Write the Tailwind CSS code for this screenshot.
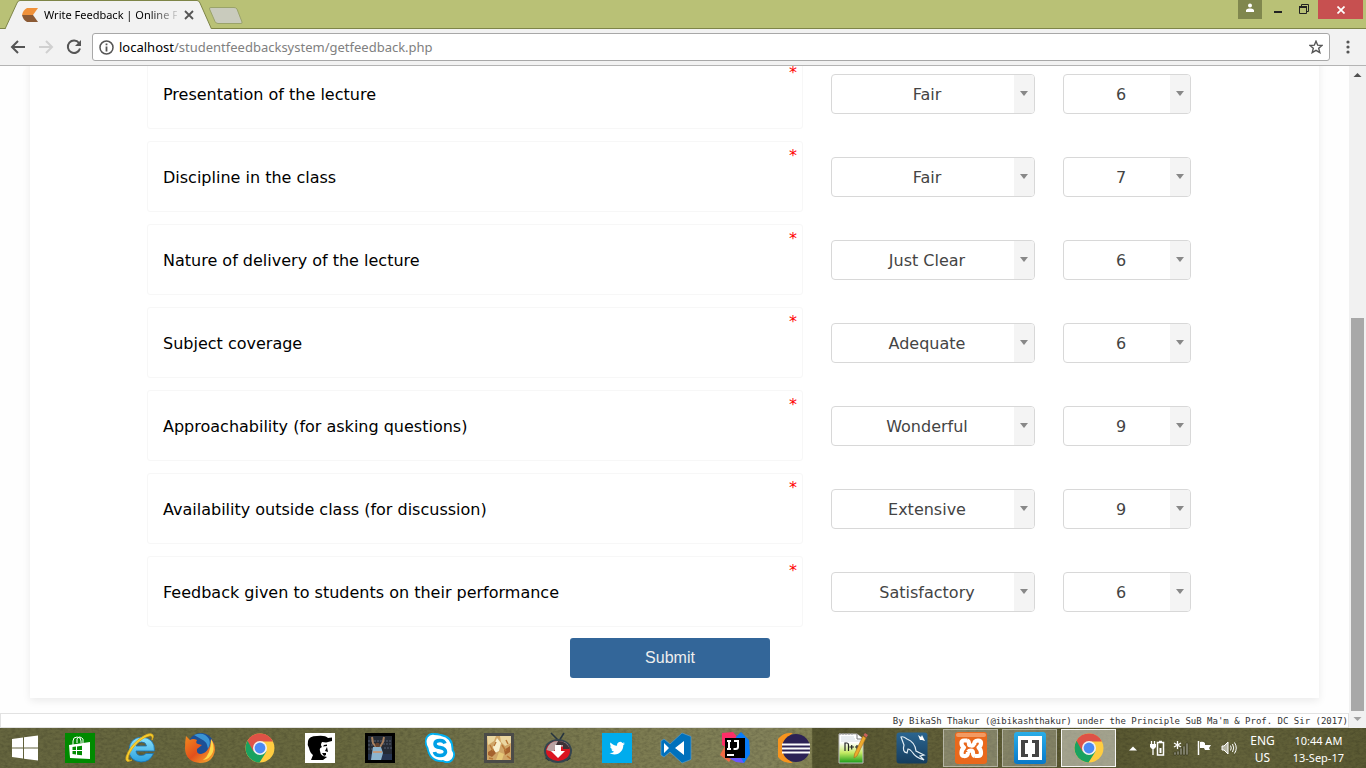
<!DOCTYPE html>
<html lang="en">
<head>
<meta charset="utf-8">
<title>Write Feedback | Online Feedback System</title>
<script src="https://cdn.jsdelivr.net/npm/@tailwindcss/browser@4"></script>
</head>
<body class="flex h-screen flex-col overflow-hidden bg-white font-['Noto_Sans',sans-serif]">

<!-- Title bar -->
<header class="flex h-[29px] shrink-0 items-start bg-[#b9c176] shadow-[inset_0_-1px_0_#7e8548]">
  <div class="relative flex h-[29px] w-[216px] items-center">
    <svg class="absolute inset-0" width="216" height="29" aria-hidden="true"><path d="M5 29L17 3Q18 .5 20 .5H197Q199 .5 200 3L211.500 29" fill="#f2f2f2" stroke="#7e8548"/></svg>
    <svg class="relative ml-[22px] shrink-0" width="16" height="14" viewBox="0 0 16 14" aria-hidden="true"><path d="M5 0H16L11 7H0Q1 2 5 0Z" fill="#f0913a"/><path d="M0 7H11L16 14H5Q1 12 0 7Z" fill="#8b5a35"/></svg>
    <span class="relative ml-[6px] w-[133px] overflow-hidden text-[11px] leading-4 whitespace-nowrap text-black [mask-image:linear-gradient(to_right,black_105px,transparent_137px)]">Write Feedback | Online F</span>
    <button class="relative ml-[7px]" aria-label="Close tab"><svg width="10" height="10" viewBox="0 0 10 10" stroke="#555" stroke-width="1.8"><path d="M1 1L9 9M9 1L1 9"/></svg></button>
  </div>
  <button class="mt-[7px] -ml-[8px]" aria-label="New tab"><svg width="36" height="18" viewBox="0 0 36 18"><path d="M3 .5H26Q28 .5 29 2L34 15Q34.500 16.500 33 16.500H10Q8 16.500 7 14.500L1.500 2Q1 .5 3 .5Z" fill="#c9cbbd" stroke="#9aa36a"/></svg></button>
  <div class="ml-auto flex h-[19px] pr-[3px]">
    <button class="flex w-6 justify-center bg-[#80874e]" aria-label="User"><svg width="10" height="13" viewBox="0 0 10 13" fill="#fff"><circle cx="5" cy="5.500" r="2"/><path d="M1 12V10Q2 8 5 8.500Q8 8 9 10V12Z"/></svg></button>
    <button class="flex w-8 justify-center" aria-label="Minimize"><svg width="8" height="19"><path d="M0 11H8V13H0Z" fill="#222"/></svg></button>
    <button class="flex w-5 justify-center" aria-label="Restore"><svg width="11" height="19" viewBox="0 0 11 19" fill="none" stroke="#222"><path d="M.5 7.500H7.500V13.500H.5Z"/><path d="M0 7H8" stroke-width="2"/><path d="M2.500 6V4.500H9.500V11.500H8"/></svg></button>
    <span class="w-1"></span>
    <button class="flex w-[45px] items-center justify-center bg-[#c75050]" aria-label="Close"><svg width="8" height="8" viewBox="0 0 8 8" stroke="#fff" stroke-width="1.700"><path d="M.5 .5L7.500 7.500M7.500 .5L.5 7.500"/></svg></button>
  </div>
</header>

<!-- Toolbar -->
<nav class="flex h-[37px] shrink-0 items-center border-b border-[#b4b4b4] bg-[#f2f2f2] pl-[10px]">
  <button aria-label="Back"><svg width="16" height="16" viewBox="0 0 16 16" fill="none" stroke="#555" stroke-width="2"><path d="M15 8H3M8 2L2 8L8 14"/></svg></button>
  <button class="ml-3" aria-label="Forward"><svg width="16" height="16" viewBox="0 0 16 16" fill="none" stroke="#d0d0d0" stroke-width="2"><path d="M1 8H13M8 2L14 8L8 14"/></svg></button>
  <button class="ml-3" aria-label="Reload"><svg width="16" height="16" viewBox="0 0 16 16" fill="none" stroke="#555" stroke-width="2"><path d="M13 4A6.200 6.200 0 1 0 14 9.500"/><path d="M15 1V7H9Z" fill="#555" stroke="none"/></svg></button>
  <div class="ml-[10px] flex h-7 flex-1 items-center rounded-[3px] border border-[#a8a8a8] bg-white px-[6px]">
    <svg width="15" height="15" viewBox="0 0 15 15" fill="none" stroke="#555" aria-hidden="true"><circle cx="7.500" cy="7.500" r="6.500" stroke-width="1.500"/><path d="M7.500 6.500V11.500M7.500 3.500V5.200" stroke-width="1.800"/></svg>
    <a href="#" class="ml-[5px] flex-1 text-[13px] leading-5 text-[#808080]"><span class="text-black">localhost</span>/studentfeedbacksystem/getfeedback.php</a>
    <button aria-label="Bookmark"><svg width="14" height="14" viewBox="0 0 14 14" fill="none" stroke="#555" stroke-width="1.400"><path d="M7 1.200L8.700 5.200L13 5.500L9.700 8.300L10.800 12.600L7 10.300L3.200 12.600L4.300 8.300L1 5.500L5.300 5.200Z"/></svg></button>
  </div>
  <button class="mr-4 ml-4" aria-label="Menu"><svg width="4" height="14" viewBox="0 0 4 14" fill="#555"><circle cx="2" cy="2" r="1.600"/><circle cx="2" cy="7" r="1.600"/><circle cx="2" cy="12" r="1.600"/></svg></button>
</nav>

<!-- Page viewport -->
<div class="flex min-h-0 flex-1 overflow-hidden">
  <main class="flex flex-1 flex-col justify-end bg-[#fefefe]">
    <form class="mx-[30px] mb-[15px] bg-white px-[117px] pt-8 pb-5 font-['DejaVu_Sans',sans-serif] text-base leading-6 text-[#444] shadow-[0_3px_8px_rgba(0,0,0,0.08)]">
      <div id="questions" class="flex flex-col gap-3 pr-[11px]"></div>
      <div class="mt-[11px] flex justify-center pr-[9px]"><button type="submit" class="h-10 w-[200px] rounded-[3px] bg-[#336699] font-['Liberation_Sans',sans-serif] text-base text-[#eee]">Submit</button></div>
    </form>
    <footer class="flex h-[15px] shrink-0 items-center justify-end border border-[#e2e2e2] bg-white font-['DejaVu_Sans_Mono',monospace] text-[9px] leading-3 whitespace-nowrap text-[#333]">By BikaSh Thakur (@ibikashthakur) under the Principle SuB Ma'm &amp; Prof. DC Sir (2017)</footer>
  </main>
  <aside class="flex w-[17px] shrink-0 flex-col items-center bg-[#f1f1f1]" aria-hidden="true">
    <svg width="17" height="17"><path d="M4.500 11L8.500 7L12.500 11Z" fill="#505050"/></svg>
    <span class="mt-auto h-[393px] w-[13px] bg-[#a8a8a8]"></span>
    <svg width="17" height="17"><path d="M4.500 6L8.500 10L12.500 6Z" fill="#a0a0a0"/></svg>
  </aside>
</div>

<!-- Taskbar -->
<div class="relative isolate flex h-10 shrink-0 items-center bg-[linear-gradient(90deg,#66663f_0,#69693f_25%,#74744c_37%,#7c7b50_45%,#83825a_56%,#858455_59.4%,#55552f_59.5%,#626039_68%,#57562f_80%,#65643c_90%,#5b5a33_100%)]">
  <svg class="absolute inset-0 -z-10 h-full w-full opacity-15" aria-hidden="true"><filter id="grain"><feTurbulence type="fractalNoise" baseFrequency=".25 .4" numOctaves="3" seed="4"/><feColorMatrix values="0 0 0 0 0  0 0 0 0 0  0 0 0 0 0  2 0 0 0 -.7"/></filter><rect width="100%" height="100%" filter="url(#grain)"/></svg>

  <button class="flex w-[50px] justify-center" aria-label="Start"><svg width="28" height="28" viewBox="0 0 28 28" fill="#fff"><path d="M1 5L12 3.500V13.500H1ZM13 3.300L27 1.500V13.500H13ZM1 14.500H12V24.500L1 23ZM13 14.500H27V26.500L13 24.700Z"/></svg></button>

  <button class="flex w-[60px] justify-center" aria-label="Store"><svg width="30" height="30" viewBox="0 0 30 30"><path fill="#008a00" d="M0 0H30V30H0Z"/><path d="M4 12L25 9V26L5 25Z" fill="#fff"/><path d="M8 12V8Q8 4 12 4Q16 4 16 8V10M12 10V6Q14 2 18 6V10" fill="none" stroke="#fff" stroke-width="1"/><path d="M7.500 14L11 13.500V17H7.500ZM12 13.400L17 12.800V17H12ZM7.500 18H11V21.500L7.500 21ZM12 18H17V22.300L12 21.700Z" fill="#008a00"/></svg></button>

  <button class="flex w-[60px] justify-center" aria-label="Internet Explorer"><svg width="32" height="32" viewBox="0 0 32 32"><defs><linearGradient id="ie" x2="0" y2="1"><stop stop-color="#8ee4fb"/><stop offset="1" stop-color="#2aa0e0"/></linearGradient></defs><path d="M30.500 19H12Q12.500 23.500 17 23.500Q20.500 23.500 22 21.500H29.500Q26 30 17 30Q5 29 5 17.500Q6 6 17.500 5Q31 6 30.500 19ZM12 14H22.500Q22 10 17.500 10Q13 10 12 14Z" fill="url(#ie)" stroke="#1672b5" stroke-width=".8"/><path d="M8 28Q1 32 2 25Q5 15 15 7Q26-1 29 3Q30 5 28 8Q29 3 25 4Q17 6 9 16Q2 26 5 28Q6 29 8 28Z" fill="#fbd22f" stroke="#d9a81a" stroke-width=".8"/></svg></button>

  <button class="flex w-[60px] justify-center" aria-label="Firefox"><svg width="32" height="32" viewBox="0 0 32 32"><defs><linearGradient id="ff" x2="1" y2="1"><stop stop-color="#f28a1e"/><stop offset=".5" stop-color="#e2501b"/><stop offset="1" stop-color="#f9b930"/></linearGradient></defs><circle cx="17" cy="14" r="13" fill="#1c4f96"/><path d="M10 3Q20-1 25 7Q27 12 24 17Q23 9 17 7Z" fill="#3a94d3"/><path d="M2 4L6 8Q9 6 13 8Q11 11 14 12L18 13L13 17Q12 22 17 22Q22 21 24 17Q27 13 27 7Q31 11 31 18Q29 31 16 31Q2 30 1 17Q1 9 2 4Z" fill="url(#ff)"/><path d="M27 7Q31 13 29 20Q26 27 19 28Q27 23 27 7Z" fill="#fcd94b"/></svg></button>

  <button class="flex w-[60px] justify-center" aria-label="Chrome"><svg width="30" height="30" viewBox="0 0 30 30"><circle cx="15" cy="15" r="14.500" fill="#ffcd41"/><path d="M15 15L2.500 7.700A14.500 14.500 0 0 0 14.500 29.500L21.500 18.500Z" fill="#1aa260"/><path d="M2.500 7.700A14.500 14.500 0 0 1 28 8.500H15L8.500 18.500Z" fill="#de5246"/><circle cx="15" cy="15" r="7" fill="#f1f1f1"/><circle cx="15" cy="15" r="5.400" fill="#4a8af4"/></svg></button>

  <button class="flex w-[60px] justify-center" aria-label="Portrait app"><svg width="30" height="30" viewBox="0 0 30 30"><path fill="#fff" d="M0 0H30V30H0Z"/><path d="M3 8Q4 3 12 3Q20 2 23 5L27 4.500V8L21 9.500L17 9Q15 12 17 14Q14 15 15 18Q15 21 18 23L22 24L18 27H6L8 22Q5 20 4 15Q2 12 3 8Z"/><path d="M19 12L22 11.500V13L18 13.500ZM22 14L23 19L20 18ZM17 20H21V22L19 23Z"/></svg></button>

  <button class="flex w-[60px] justify-center" aria-label="Cricket app"><svg width="30" height="30" viewBox="0 0 30 30"><path d="M0 0H30V30H0Z"/><path d="M3 3H27V27H3Z" fill="#252b35"/><path d="M3 8H27M3 12H10M18 11H27M3 16H9M19 15H27" stroke="#3d4553" stroke-width="2" stroke-dasharray="2 1"/><path d="M3 21H27V27H3Z" fill="#263550"/><path d="M7 4L8 10L11 14M19 4L18 9L15 14" fill="none" stroke="#a8805f" stroke-width="2"/><circle cx="12.500" cy="12" r="2.300" fill="#67432f"/><path d="M8 14L16 14L18 20L16 27H6L7 20Z" fill="#8db5cf"/><path d="M8 19H17" stroke="#e58b4a" stroke-width="1.200"/></svg></button>

  <button class="flex w-[59px] justify-center" aria-label="Skype"><svg width="30" height="30" viewBox="0 0 30 30"><path d="M9 1Q13 1 16 2Q28 4 27.500 17Q31 22 27 27Q23 31 18 28Q5 29 2.500 15Q-1 9 2 4Q5 0 9 1Z" fill="#fff" stroke="#00aff0" stroke-width="1.800"/><path d="M20 10.500Q19 7.500 15 7.500Q10 7.500 10 11Q10 14 15 14.500Q20.500 15.500 20.500 19Q20 22.500 15 22.500Q10 22.500 9.500 19" fill="none" stroke="#00a0e6" stroke-width="3.600"/></svg></button>

  <button class="flex w-[59px] justify-center" aria-label="Game"><svg width="30" height="30" viewBox="0 0 30 30"><path fill="#4b4b48" d="M0 0H30V30H0Z"/><path fill="#cfa566" d="M3 3H27V27H3Z"/><path d="M3 3H12L10 8L4 12ZM16 3H27V10L21 13L17 9Z" fill="#ead6a0"/><path d="M13 5L17 10L15 18L11 20L9 14Z" fill="#f8efcd"/><path d="M4 19L9 16L12 20L8 24L4 22ZM20 17L26 13V19L21 22Z" fill="#a5622e"/><path d="M15 19L20 21L18 27H12Z" fill="#e5c778"/><path d="M6 12L9 18M18 12L22 18M23 23L27 26M5 25L9 26M12 9L10 13M22 7L24 11" stroke="#b87838" stroke-width="1.500"/></svg></button>

  <button class="flex w-[59px] justify-center" aria-label="Video downloader"><svg width="30" height="32" viewBox="0 0 30 32"><path d="M8 1L16 9L21 1" fill="none" stroke="#26343f" stroke-width="1.500"/><path d="M3 25L7 28M27 25L23 28" stroke="#26343f" stroke-width="3"/><ellipse cx="15" cy="19" rx="14" ry="12" fill="#34444e"/><ellipse cx="15" cy="19" rx="12" ry="10" fill="#db1420"/><path d="M3.500 18Q6 9 15 9Q24 9 26 15Q15 13 10 20Z" fill="#b9a3a3"/><path d="M15 9Q24 9 26.500 17L20 17V13H13Z" fill="#3d3136"/><path d="M12 13H18V19H22L15 26L8 19H12Z" fill="#fff"/></svg></button>

  <button class="flex w-[59px] justify-center" aria-label="Twitter"><svg width="30" height="30" viewBox="0 0 30 30"><path fill="#00aced" d="M0 0H30V30H0Z"/><path transform="translate(7.500 7.500) scale(.64)" d="M23.950 4.570a10 10 0 0 1-2.820.77 4.960 4.960 0 0 0 2.160-2.720c-.95.550-2 .95-3.130 1.180a4.920 4.920 0 0 0-8.380 4.480C7.690 8.090 4.070 6.130 1.640 3.160a4.820 4.820 0 0 0-.66 2.470c0 1.710.87 3.210 2.190 4.100a4.900 4.900 0 0 1-2.230-.62v.06a4.920 4.920 0 0 0 3.950 4.830 5 5 0 0 1-2.210.08 4.940 4.940 0 0 0 4.600 3.420A9.870 9.870 0 0 1 0 19.540a14 14 0 0 0 7.550 2.210c9.050 0 14-7.500 14-13.980v-.64a9.930 9.930 0 0 0 2.460-2.550z" fill="#fff"/></svg></button>

  <button class="flex w-[59px] justify-center" aria-label="Visual Studio Code"><svg width="32" height="32" viewBox="0 0 32 32"><path d="M22 1L31 4.500V27.500L22 31L10 20L4 25L1 23V9L4 7L10 12Z" fill="#0071bc" stroke="#5fa5d6" stroke-width=".6"/><path d="M4 11L9 16L4 21ZM24 9V23L15 16Z" fill="#fff"/></svg></button>

  <button class="flex w-[59px] justify-center" aria-label="IntelliJ IDEA"><svg width="32" height="32" viewBox="0 0 32 32"><path d="M3 1L14 0L20 7L12 18L3 13Z" fill="#fe2f68"/><path d="M1 23L8 10L19 18L10 30Z" fill="#ef6a43"/><path d="M17 5L22 0L30 8L31 22L25 31L12 27Z" fill="#087cfa"/><path d="M10 26L22 26L25 31L17 30Z" fill="#6b57ff"/><path d="M6 6H26V26H6Z"/><path d="M8 9H12M10 9V17M8 17H12M15 9H19V15Q19 17 16.500 17H14.500" fill="none" stroke="#fff" stroke-width="2"/><path d="M8 22H15V24H8Z" fill="#fff"/></svg></button>

  <button class="flex w-[59px] justify-center" aria-label="Eclipse"><svg width="32" height="30" viewBox="0 0 32 30"><path d="M12 1A14 14 0 0 0 12 29A18 18 0 0 1 12 1Z" fill="#f7941e" stroke="#f7941e" stroke-width="2"/><circle cx="18" cy="15" r="14" fill="#2c2255"/><path d="M4 11.500H32M4 15.500H32M4 19.500H32" stroke="#fff" stroke-width="2"/></svg></button>

  <button class="flex w-[59px] justify-center" aria-label="Notepad++"><svg width="32" height="32" viewBox="0 0 32 32"><defs><linearGradient id="np" x2="0" y2="1"><stop offset=".3" stop-color="#fff"/><stop offset=".65" stop-color="#c4ea62"/><stop offset="1" stop-color="#159a18"/></linearGradient></defs><path d="M2 2H20L26 7V31H2Z" fill="url(#np)" stroke="#bbb"/><path d="M20 2V7H26" fill="#fff" stroke="#777"/><path d="M4 5H17M4 7H18M4 9H23" stroke="#c8d0d8" stroke-width=".8"/><path d="M3 1V3M6 1V3M9 1V3M12 1V3M15 1V3" stroke="#999"/><path d="M8 19V11H10Q11.500 11 11.500 13V19M12.500 15H17M14.700 13V17.500M18 15H22M20 13V17.500" fill="none" stroke="#222" stroke-width="1.200"/><path d="M26 4L29 6L20 24L17 26L17.500 22Z" fill="#edaa2d" stroke="#a8691c" stroke-width=".6"/><path d="M26.500 3L28 1L31 3L29.500 5.500Z" fill="#c9635c"/></svg></button>

  <button class="flex w-[59px] justify-center" aria-label="MySQL Workbench"><svg width="32" height="32" viewBox="0 0 32 32"><defs><linearGradient id="my" x2="0" y2="1"><stop stop-color="#2b6590"/><stop offset="1" stop-color="#163d5e"/></linearGradient></defs><rect x=".5" y=".5" width="31" height="31" rx="3" fill="url(#my)"/><path d="M11 21Q6 20 8 13L5 5Q7 4 11 7Q19 10 20 19L28 23L24 24L28 28Q19 25 17 21Q14 17 12 17Z" fill="none" stroke="#e4eef5" stroke-width="1.200"/><path d="M22 3L25 5L26 3L28 7L29 9L26 8L24 8Z" fill="#fff"/></svg></button>

  <div class="flex w-[59px] justify-center"><button class="flex h-[38px] w-[55px] items-center justify-center border border-white/40 bg-white/25" aria-label="XAMPP"><svg width="32" height="32" viewBox="0 0 32 32"><rect width="32" height="32" rx="3" fill="#e9681c"/><rect x="1" y="1" width="30" height="4" rx="2" fill="#f39a62"/><path d="M12 8.500H9Q6.500 8.500 6.500 11Q6.500 14 9 15.500Q6.500 17.500 6.500 21Q6.500 24 9 24Q13 24.500 13 20M19 13Q19 8.500 23 8.500Q26 8.500 26 11Q26 14 23.500 15.500Q26 17.500 26 21Q26 24 23 24H20M12 8.500Q14 9 14 12Q14 13.500 16 13.500Q19 14 19 11M13 20Q14 18.500 16 18.500Q18 18.500 18 21Q18 23.500 20 24" fill="none" stroke="#fff" stroke-width="4.200" stroke-linejoin="round"/></svg></button></div>

  <div class="flex w-[59px] justify-center"><button class="flex h-[38px] w-[55px] items-center justify-center border border-white/40 bg-white/25" aria-label="Brackets"><svg width="32" height="32" viewBox="0 0 32 32"><defs><linearGradient id="br" x2="0" y2="1"><stop stop-color="#2aaee8"/><stop offset="1" stop-color="#0878c8"/></linearGradient></defs><rect width="32" height="32" rx="3" fill="url(#br)"/><path fill="#fff" d="M4 4H28V28H4Z"/><path d="M7 8H14V11H11V22H14V25H7ZM25 8H18V11H21V22H18V25H25Z" fill="#444"/></svg></button></div>

  <div class="flex w-[59px] justify-center"><button class="flex h-[38px] w-[55px] items-center justify-center border border-white/90 bg-white/45" aria-label="Chrome window"><svg width="30" height="30" viewBox="0 0 30 30"><circle cx="15" cy="15" r="14.500" fill="#ffcd41"/><path d="M15 15L2.500 7.700A14.500 14.500 0 0 0 14.500 29.500L21.500 18.500Z" fill="#1aa260"/><path d="M2.500 7.700A14.500 14.500 0 0 1 28 8.500H15L8.500 18.500Z" fill="#de5246"/><circle cx="15" cy="15" r="7" fill="#f1f1f1"/><circle cx="15" cy="15" r="5.400" fill="#4a8af4"/></svg></button></div>

  <div class="ml-auto flex items-center gap-2 pr-[22px] text-white">
    <svg class="mr-1" width="8" height="5" aria-hidden="true"><path d="M0 4.500L4 .5L8 4.500Z" fill="#fff"/></svg>
    <svg width="16" height="16" viewBox="0 0 16 16" fill="none" stroke="#fff" aria-hidden="true"><path d="M2.500 1V4M5.500 1V4M4 8V15" stroke-width="1.300"/><path d="M1 4H7V7L5 9H3L1 7Z" fill="#fff" stroke="none"/><path d="M8.500 2.500H14.500V15H8.500ZM10 1.500H13" stroke-width="1.500"/><path d="M10.500 8H12.500V13H10.500Z" fill="#fff" stroke="none"/></svg>
    <svg width="16" height="16" viewBox="0 0 16 16" aria-hidden="true"><path d="M4.500 1V9M1 3L8 7M8 3L1 7" stroke="#fff" stroke-width="1.300"/><path d="M1 12H3V15H1ZM4 11H6V15H4ZM7 8H9V15H7ZM10 6H12V15H10ZM13 3H15V15H13Z" fill="#9a9a86" stroke="#33331c" stroke-width=".6"/></svg>
    <svg width="16" height="16" viewBox="0 0 16 16" aria-hidden="true"><path d="M1.500 1V15" stroke="#fff" stroke-width="1.500"/><path d="M3 2Q6 1 8 3V5H14L12 8L13 10H8L7 8H3Z" fill="#fff"/></svg>
    <svg width="16" height="16" viewBox="0 0 16 16" fill="none" stroke="#fff" aria-hidden="true"><path d="M1 6H3L7 2V14L3 10H1Z" fill="#fff" fill-opacity=".55"/><path d="M9.500 5.500Q11 8 9.500 10.500M11.500 4Q14 8 11.500 12M13.500 2.500Q17 8 13.500 13.500"/></svg>
    <div class="ml-[5px] pt-px text-center text-[12px] leading-[17px]">ENG<br>US</div>
    <div class="ml-[10px] pt-px text-center text-[11px] leading-[17px] whitespace-nowrap">10:44 AM<br>13-Sep-17</div>
  </div>
</div>

<script>
const questions = [
  ["Presentation of the lecture", "Fair", 6],
  ["Discipline in the class", "Fair", 7],
  ["Nature of delivery of the lecture", "Just Clear", 6],
  ["Subject coverage", "Adequate", 6],
  ["Approachability (for asking questions)", "Wonderful", 9],
  ["Availability outside class (for discussion)", "Extensive", 9],
  ["Feedback given to students on their performance", "Satisfactory", 6],
];
const dropdown = (value, attributes) => `
  <select ${attributes} class="h-10 w-full appearance-none rounded-[4px] border border-[#d8d8d8] bg-white pt-[3px] pr-3 text-center [text-align-last:center]"><option>${value}</option></select>
  <i class="pointer-events-none absolute inset-y-px right-px flex w-5 items-center justify-center rounded-r-[3px] bg-[#f4f4f4]"><svg width="8" height="5"><path d="M0 0H8L4 5Z" fill="#888"/></svg></i>`;
document.getElementById("questions").innerHTML = questions.map(([text, rating, score], i) => `
  <div class="flex items-center gap-7">
    <label for="q${i}" class="relative flex h-[71px] flex-1 items-center rounded-[3px] border border-[#f7f7f7] px-[15px] pt-[2px] text-black">${text}<span class="absolute top-[2px] right-[5px] text-[#f00]">*</span></label>
    <div class="relative w-[204px]">${dropdown(rating, `id="q${i}"`)}</div>
    <div class="relative w-[128px]">${dropdown(score, `aria-label="Score: ${text}"`)}</div>
  </div>`).join("");
</script>
</body>
</html>
